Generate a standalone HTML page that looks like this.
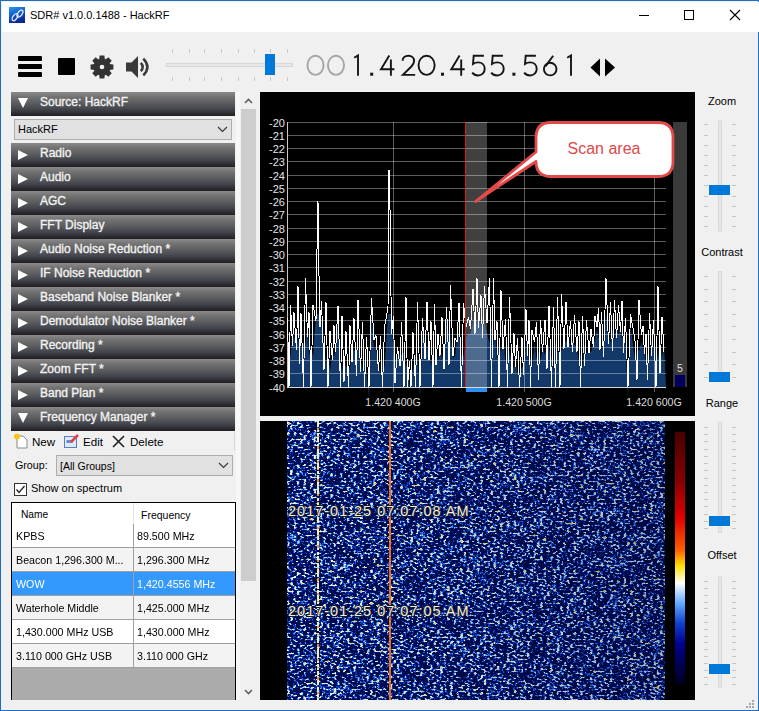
<!DOCTYPE html>
<html><head><meta charset="utf-8">
<style>
*{margin:0;padding:0;box-sizing:border-box}
html,body{width:759px;height:711px;overflow:hidden;background:#f0f0f0;font-family:"Liberation Sans",sans-serif}
.a{position:absolute}
#win{position:absolute;left:0;top:0;width:759px;height:711px;border:1px solid #1a6fc4;background:#f0f0f0}
#title{position:absolute;left:1px;top:1px;width:757px;height:30px;background:#fff}
.hdr{position:absolute;left:11px;width:224px;height:24px;background:linear-gradient(#8a8a8a 0%,#707070 22%,#5a5b5e 48%,#41444b 72%,#2c2c30 90%,#1e1e21 100%);color:#f2f2f2;font-size:12px;-webkit-text-stroke:0.35px #f2f2f2}
.hdr span{position:absolute;left:29px;top:3px;white-space:nowrap}
.hdr i{position:absolute;left:7px;top:7px;width:0;height:0}
.col i{border-top:5px solid transparent;border-bottom:5px solid transparent;border-left:10px solid #fff;top:7px;left:7px}
.exp i{border-left:5px solid transparent;border-right:5px solid transparent;border-top:10px solid #fff;top:6px;left:7px}
.lbl{font-size:11px;color:#000;white-space:nowrap}
.fc{position:absolute;top:48px;width:30px;text-align:center;font-size:30px;line-height:34px;color:#161616}
.tick{position:absolute;width:4px;height:1px;background:#c4c4c4}
.track{position:absolute;left:718px;width:4px;background:#e7e7e7;border:1px solid #d9d9d9}
.thumb{position:absolute;left:709px;width:21px;height:10px;background:#0078d7}
.rl{position:absolute;left:690px;width:64px;text-align:center;font-size:11px;color:#000}
td{font-size:12px}
</style></head><body>
<div id="win">
<div id="title"></div>
</div>

<!-- title bar icon -->
<div class="a" style="left:9px;top:7px;width:16px;height:16px;background:linear-gradient(160deg,#2a9af0 0%,#1060d0 40%,#0a32a0 75%,#081e80 100%)"></div>
<svg class="a" style="left:9px;top:7px" width="16" height="16" viewBox="0 0 16 16"><g fill="none" stroke="#e8eeff" stroke-width="1.3"><ellipse cx="6" cy="10.2" rx="2.1" ry="4" transform="rotate(35 6 10.2)"/><ellipse cx="11" cy="6.6" rx="2.1" ry="4" transform="rotate(35 11 6.6)"/></g></svg>
<div class="a" style="left:30px;top:9px;font-size:11px;color:#000;white-space:nowrap">SDR# v1.0.0.1488 - HackRF</div>
<!-- window controls -->
<div class="a" style="left:639px;top:15px;width:10px;height:1px;background:#000"></div>
<div class="a" style="left:684px;top:10px;width:10px;height:10px;border:1px solid #000"></div>
<svg class="a" style="left:729px;top:9px" width="12" height="12" viewBox="0 0 12 12"><path d="M1 1L11 11M11 1L1 11" stroke="#000" stroke-width="1.1"/></svg>

<!-- toolbar -->
<div class="a" style="left:18px;top:56px;width:24px;height:5px;background:#000;border-radius:1px"></div>
<div class="a" style="left:18px;top:64px;width:24px;height:5px;background:#000;border-radius:1px"></div>
<div class="a" style="left:18px;top:72px;width:24px;height:5px;background:#000;border-radius:1px"></div>
<div class="a" style="left:58px;top:58px;width:17px;height:17px;background:#000;border-radius:1px"></div>
<svg class="a" style="left:90px;top:55px" width="24" height="24" viewBox="0 0 24 24">
<g fill="#333"><circle cx="12" cy="12" r="8.6"/><path d="M9.6 0.6H14.4L14.9 5H9.1Z" transform="rotate(0 12 12)"/><path d="M9.6 0.6H14.4L14.9 5H9.1Z" transform="rotate(45 12 12)"/><path d="M9.6 0.6H14.4L14.9 5H9.1Z" transform="rotate(90 12 12)"/><path d="M9.6 0.6H14.4L14.9 5H9.1Z" transform="rotate(135 12 12)"/><path d="M9.6 0.6H14.4L14.9 5H9.1Z" transform="rotate(180 12 12)"/><path d="M9.6 0.6H14.4L14.9 5H9.1Z" transform="rotate(225 12 12)"/><path d="M9.6 0.6H14.4L14.9 5H9.1Z" transform="rotate(270 12 12)"/><path d="M9.6 0.6H14.4L14.9 5H9.1Z" transform="rotate(315 12 12)"/></g><circle cx="12" cy="12" r="2.3" fill="#f0f0f0"/></svg>
<svg class="a" style="left:125px;top:55px" width="26" height="24" viewBox="0 0 26 24">
<path d="M1 7.5H6.5L13 1V23L6.5 16.5H1Z" fill="#3a3a3a"/>
<path d="M15.8 7.8Q19.6 12 15.8 16.2" fill="none" stroke="#3a3a3a" stroke-width="2.5"/>
<path d="M18.3 3.6Q26.5 12 18.3 20.4" fill="none" stroke="#3a3a3a" stroke-width="2.5"/>
</svg>
<!-- audio slider -->
<div class="a" style="left:166px;top:63px;width:127px;height:4px;background:#e7e7e7;border:1px solid #d6d6d6"></div>
<div class="a" style="left:172px;top:49px;width:1px;height:4px;background:#c8c8c8"></div>
<div class="a" style="left:172px;top:77px;width:1px;height:4px;background:#c8c8c8"></div>
<div class="a" style="left:189px;top:49px;width:1px;height:4px;background:#c8c8c8"></div>
<div class="a" style="left:189px;top:77px;width:1px;height:4px;background:#c8c8c8"></div>
<div class="a" style="left:204px;top:49px;width:1px;height:4px;background:#c8c8c8"></div>
<div class="a" style="left:204px;top:77px;width:1px;height:4px;background:#c8c8c8"></div>
<div class="a" style="left:221px;top:49px;width:1px;height:4px;background:#c8c8c8"></div>
<div class="a" style="left:221px;top:77px;width:1px;height:4px;background:#c8c8c8"></div>
<div class="a" style="left:238px;top:49px;width:1px;height:4px;background:#c8c8c8"></div>
<div class="a" style="left:238px;top:77px;width:1px;height:4px;background:#c8c8c8"></div>
<div class="a" style="left:254px;top:49px;width:1px;height:4px;background:#c8c8c8"></div>
<div class="a" style="left:254px;top:77px;width:1px;height:4px;background:#c8c8c8"></div>
<div class="a" style="left:270px;top:49px;width:1px;height:4px;background:#c8c8c8"></div>
<div class="a" style="left:270px;top:77px;width:1px;height:4px;background:#c8c8c8"></div>
<div class="a" style="left:287px;top:49px;width:1px;height:4px;background:#c8c8c8"></div>
<div class="a" style="left:287px;top:77px;width:1px;height:4px;background:#c8c8c8"></div>
<div class="a" style="left:265px;top:54px;width:10px;height:21px;background:#0078d7"></div>

<!-- frequency display -->
<svg class="a" style="left:0;top:0" width="759" height="100" viewBox="0 0 759 100"><g fill="none" stroke-width="1.9" stroke-linecap="butt">
<g transform="translate(306.5 54.8)" stroke="#a4a4a4" color="#a4a4a4"><ellipse cx="9" cy="10.5" rx="8.05" ry="9.6"/></g>
<g transform="translate(327.0 54.8)" stroke="#a4a4a4" color="#a4a4a4"><ellipse cx="9" cy="10.5" rx="8.05" ry="9.6"/></g>
<g transform="translate(353.6 54.8)" stroke="#151515" color="#151515"><path d="M0.6 2.9L4.4 0.6V20.9"/></g>
<g transform="translate(370.2 54.8)" stroke="#151515" color="#151515"><rect x="0" y="17.9" width="3" height="3" stroke="none" fill="currentColor"/></g>
<g transform="translate(380.0 54.8)" stroke="#151515" color="#151515"><path d="M9.3 0.8L1 14.4H14.4M10.9 4.6V20.9"/></g>
<g transform="translate(401.6 54.8)" stroke="#151515" color="#151515"><path d="M1 5.9C1 2.7 3.6 0.9 6.8 0.9C10.1 0.9 12.5 3.1 12.5 6.2C12.5 8.4 11.5 9.9 9.8 11.7L1.3 20.1H13.6"/></g>
<g transform="translate(417.6 54.8)" stroke="#151515" color="#151515"><ellipse cx="9" cy="10.5" rx="8.05" ry="9.6"/></g>
<g transform="translate(441.0 54.8)" stroke="#151515" color="#151515"><rect x="0" y="17.9" width="3" height="3" stroke="none" fill="currentColor"/></g>
<g transform="translate(450.3 54.8)" stroke="#151515" color="#151515"><path d="M9.3 0.8L1 14.4H14.4M10.9 4.6V20.9"/></g>
<g transform="translate(471.6 54.8)" stroke="#151515" color="#151515"><path d="M12.3 0.9H2.1L1.4 9.1C2.9 8.1 4.6 7.6 6.5 7.6C10.3 7.6 13.1 10.3 13.1 14.1C13.1 17.9 10.2 20.7 6.4 20.7C4 20.7 2 19.7 0.6 17.9"/></g>
<g transform="translate(490.6 54.8)" stroke="#151515" color="#151515"><path d="M12.3 0.9H2.1L1.4 9.1C2.9 8.1 4.6 7.6 6.5 7.6C10.3 7.6 13.1 10.3 13.1 14.1C13.1 17.9 10.2 20.7 6.4 20.7C4 20.7 2 19.7 0.6 17.9"/></g>
<g transform="translate(512.4 54.8)" stroke="#151515" color="#151515"><rect x="0" y="17.9" width="3" height="3" stroke="none" fill="currentColor"/></g>
<g transform="translate(523.6 54.8)" stroke="#151515" color="#151515"><path d="M12.3 0.9H2.1L1.4 9.1C2.9 8.1 4.6 7.6 6.5 7.6C10.3 7.6 13.1 10.3 13.1 14.1C13.1 17.9 10.2 20.7 6.4 20.7C4 20.7 2 19.7 0.6 17.9"/></g>
<g transform="translate(543.0 54.8)" stroke="#151515" color="#151515"><path d="M10.2 0.9L2.4 11.6"/><circle cx="7.2" cy="14.3" r="6.3"/></g>
<g transform="translate(566.6 54.8)" stroke="#151515" color="#151515"><path d="M0.6 2.9L4.4 0.6V20.9"/></g>
</g></svg>
<svg class="a" style="left:589px;top:58px" width="28" height="19" viewBox="0 0 28 19">
<path d="M11 0.5V18.5L1.5 9.5Z" fill="#000"/><path d="M16 0.5V18.5L26 9.5Z" fill="#000"/></svg>

<!-- left panel -->
<div class="hdr exp" style="top:92px"><i></i><span>Source: HackRF</span></div>
<div class="hdr col" style="top:143px"><i></i><span>Radio</span></div>
<div class="hdr col" style="top:167px"><i></i><span>Audio</span></div>
<div class="hdr col" style="top:191px"><i></i><span>AGC</span></div>
<div class="hdr col" style="top:215px"><i></i><span>FFT Display</span></div>
<div class="hdr col" style="top:239px"><i></i><span>Audio Noise Reduction *</span></div>
<div class="hdr col" style="top:263px"><i></i><span>IF Noise Reduction *</span></div>
<div class="hdr col" style="top:287px"><i></i><span>Baseband Noise Blanker *</span></div>
<div class="hdr col" style="top:311px"><i></i><span>Demodulator Noise Blanker *</span></div>
<div class="hdr col" style="top:335px"><i></i><span>Recording *</span></div>
<div class="hdr col" style="top:359px"><i></i><span>Zoom FFT *</span></div>
<div class="hdr col" style="top:383px"><i></i><span>Band Plan *</span></div>
<div class="hdr exp" style="top:407px"><i></i><span>Frequency Manager *</span></div>
<div class="a" style="left:14px;top:119px;width:218px;height:21px;background:#e1e1e1;border:1px solid #adadad"></div>
<div class="a lbl" style="left:18px;top:123px">HackRF</div>
<svg class="a" style="left:217px;top:126px" width="11" height="7" viewBox="0 0 11 7"><path d="M1 1L5.5 5.5L10 1" fill="none" stroke="#333" stroke-width="1.1"/></svg>

<!-- freq manager toolbar -->
<svg class="a" style="left:13px;top:433px" width="16" height="16" viewBox="0 0 16 16">
<path d="M4 3H10L14 7V15H4Z" fill="#fff" stroke="#8a8a8a"/><circle cx="4" cy="3.5" r="3" fill="#f5c518"/></svg>
<div class="a lbl" style="left:32px;top:435px;font-size:11.6px">New</div>
<svg class="a" style="left:63px;top:433px" width="16" height="16" viewBox="0 0 16 16">
<rect x="1.5" y="3.5" width="12" height="11" fill="#dde8f8" stroke="#5a7fc0"/><rect x="3.5" y="7" width="6" height="3" fill="#6a8ad0"/><path d="M8 9L15 2" stroke="#e04040" stroke-width="2.5"/></svg>
<div class="a lbl" style="left:83px;top:435px;font-size:11.6px">Edit</div>
<svg class="a" style="left:112px;top:435px" width="13" height="13" viewBox="0 0 13 13"><path d="M1 1L12 12M12 1L1 12" stroke="#222" stroke-width="1.6"/></svg>
<div class="a lbl" style="left:130px;top:435px;font-size:11.6px">Delete</div>
<div class="a" style="left:234px;top:433px;width:1px;height:18px;background:#d8d8d8"></div>
<div class="a lbl" style="left:15px;top:459px;font-size:10.7px">Group:</div>
<div class="a" style="left:56px;top:455px;width:177px;height:21px;background:#e1e1e1;border:1px solid #adadad"></div>
<div class="a lbl" style="left:60px;top:460px;font-size:10.5px">[All Groups]</div>
<svg class="a" style="left:218px;top:462px" width="11" height="7" viewBox="0 0 11 7"><path d="M1 1L5.5 5.5L10 1" fill="none" stroke="#333" stroke-width="1.1"/></svg>
<div class="a" style="left:14px;top:483px;width:13px;height:13px;background:#fff;border:1px solid #333"></div>
<svg class="a" style="left:15px;top:484px" width="11" height="11" viewBox="0 0 11 11"><path d="M1.5 5.5L4 8.5L9.5 2" fill="none" stroke="#222" stroke-width="1.3"/></svg>
<div class="a lbl" style="left:31px;top:482px">Show on spectrum</div>

<!-- table -->
<div class="a" style="left:11px;top:502px;width:225px;height:198px;border:1px solid #000;border-bottom:0;background:#ababab"></div>
<div class="a" style="left:12px;top:503px;width:223px;height:21px;background:#fff"></div>
<div class="a lbl" style="left:21px;top:509px;font-size:10.2px">Name</div>
<div class="a lbl" style="left:141px;top:509px;font-size:10.5px">Frequency</div>
<div class="a" style="left:133px;top:503px;width:1px;height:20px;background:#e5e5e5"></div>
<div class="a" style="left:12px;top:524px;width:223px;height:24px;background:#fff;border-bottom:1px solid #a0a0a0"></div>
<div class="a" style="left:133px;top:524px;width:1px;height:23px;background:#a0a0a0"></div>
<div class="a lbl" style="left:16px;top:529px;color:#000;font-size:11.6px;transform:scaleX(0.922);transform-origin:0 0">KPBS</div>
<div class="a lbl" style="left:137px;top:529px;color:#000;font-size:11.6px;transform:scaleX(0.922);transform-origin:0 0">89.500 MHz</div>
<div class="a" style="left:12px;top:548px;width:223px;height:24px;background:#f3f3f3;border-bottom:1px solid #a0a0a0"></div>
<div class="a" style="left:133px;top:548px;width:1px;height:23px;background:#a0a0a0"></div>
<div class="a lbl" style="left:16px;top:553px;color:#000;font-size:11.6px;transform:scaleX(0.922);transform-origin:0 0">Beacon 1,296.300 M...</div>
<div class="a lbl" style="left:137px;top:553px;color:#000;font-size:11.6px;transform:scaleX(0.922);transform-origin:0 0">1,296.300 MHz</div>
<div class="a" style="left:12px;top:572px;width:223px;height:24px;background:#3399ff;border-bottom:1px solid #a0a0a0"></div>
<div class="a" style="left:133px;top:572px;width:1px;height:23px;background:#a0a0a0"></div>
<div class="a lbl" style="left:16px;top:577px;color:#fff;font-size:11.6px;transform:scaleX(0.922);transform-origin:0 0">WOW</div>
<div class="a lbl" style="left:137px;top:577px;color:#fff;font-size:11.6px;transform:scaleX(0.922);transform-origin:0 0">1,420.4556 MHz</div>
<div class="a" style="left:12px;top:596px;width:223px;height:24px;background:#f3f3f3;border-bottom:1px solid #a0a0a0"></div>
<div class="a" style="left:133px;top:596px;width:1px;height:23px;background:#a0a0a0"></div>
<div class="a lbl" style="left:16px;top:601px;color:#000;font-size:11.6px;transform:scaleX(0.922);transform-origin:0 0">Waterhole Middle</div>
<div class="a lbl" style="left:137px;top:601px;color:#000;font-size:11.6px;transform:scaleX(0.922);transform-origin:0 0">1,425.000 MHz</div>
<div class="a" style="left:12px;top:620px;width:223px;height:24px;background:#fff;border-bottom:1px solid #a0a0a0"></div>
<div class="a" style="left:133px;top:620px;width:1px;height:23px;background:#a0a0a0"></div>
<div class="a lbl" style="left:16px;top:625px;color:#000;font-size:11.6px;transform:scaleX(0.922);transform-origin:0 0">1,430.000 MHz USB</div>
<div class="a lbl" style="left:137px;top:625px;color:#000;font-size:11.6px;transform:scaleX(0.922);transform-origin:0 0">1,430.000 MHz</div>
<div class="a" style="left:12px;top:644px;width:223px;height:24px;background:#f3f3f3;border-bottom:1px solid #a0a0a0"></div>
<div class="a" style="left:133px;top:644px;width:1px;height:23px;background:#a0a0a0"></div>
<div class="a lbl" style="left:16px;top:649px;color:#000;font-size:11.6px;transform:scaleX(0.922);transform-origin:0 0">3.110 000 GHz USB</div>
<div class="a lbl" style="left:137px;top:649px;color:#000;font-size:11.6px;transform:scaleX(0.922);transform-origin:0 0">3.110 000 GHz</div>

<!-- left scrollbar -->
<div class="a" style="left:236px;top:92px;width:4px;height:608px;background:#f7f7f7"></div>
<div class="a" style="left:241px;top:109px;width:15px;height:472px;background:#cdcdcd"></div>
<svg class="a" style="left:244px;top:98px" width="9" height="6" viewBox="0 0 9 6"><path d="M1 5L4.5 1.5L8 5" fill="none" stroke="#606060" stroke-width="1.6"/></svg>
<svg class="a" style="left:244px;top:689px" width="9" height="6" viewBox="0 0 9 6"><path d="M1 1L4.5 4.5L8 1" fill="none" stroke="#606060" stroke-width="1.6"/></svg>

<!-- spectrum panel -->
<div class="a" style="left:260px;top:92px;width:435px;height:324px;background:#000"></div>
<svg class="a" style="left:0;top:0" width="759" height="711" viewBox="0 0 759 711">
<polygon points="287,387 287.5,363.3 289.0,347.3 290.5,356.4 292.5,331.5 294.0,339.6 296.5,328.9 298.0,344.0 299.5,331.6 301.0,348.9 303.5,343.3 305.5,344.6 307.5,319.7 309.0,355.9 311.0,345.4 313.0,356.7 316.0,314.1 317.5,314.1 318.0,314.1 318.6,314.1 320.0,314.1 321.5,324.9 324.0,346.8 326.0,363.7 328.0,350.8 330.0,369.7 332.5,353.3 334.0,356.5 335.5,349.5 338.0,316.6 340.5,361.9 342.0,372.1 344.0,353.5 346.0,367.2 348.5,366.8 350.0,368.9 352.0,346.0 354.0,350.9 356.5,348.7 358.0,348.7 360.5,357.7 362.5,371.0 364.5,359.2 366.5,372.4 369.0,397.6 371.5,314.1 374.0,348.2 376.0,348.2 378.5,364.1 380.5,375.2 382.5,360.6 384.5,367.7 388.0,314.1 389.0,314.1 389.8,314.1 390.3,314.1 391.5,314.1 393.5,354.9 395.0,360.1 397.5,357.6 400.0,354.6 401.5,354.6 404.0,352.6 406.0,367.6 407.5,358.8 409.5,388.8 411.0,370.5 413.0,370.2 415.5,354.9 417.5,354.9 420.0,397.6 422.5,328.5 425.0,341.1 427.0,351.0 429.0,338.3 431.0,366.7 433.0,348.1 434.5,362.8 436.0,345.0 438.0,362.1 440.0,346.3 442.0,358.1 444.0,354.0 446.5,318.1 449.0,335.5 450.5,335.5 453.0,357.7 455.0,356.1 457.0,338.2 459.0,333.0 461.5,355.7 463.5,355.7 466.0,337.4 468.5,333.7 470.5,333.7 473.0,321.9 475.0,314.1 477.0,323.9 478.5,314.1 481.0,327.2 482.5,316.9 484.5,322.3 487.0,333.7 489.5,343.3 491.5,325.2 493.5,345.7 495.0,323.7 497.0,359.9 499.0,343.3 501.0,352.8 503.0,330.4 505.5,363.4 507.5,344.7 509.5,352.4 512.0,364.2 514.0,368.5 515.5,356.7 517.5,374.6 519.5,373.3 522.0,366.8 523.5,366.8 526.0,343.5 527.5,339.2 529.0,365.1 530.5,356.4 532.0,369.3 534.5,342.9 536.5,358.7 538.5,351.2 540.5,361.0 542.5,346.3 545.0,355.2 547.0,342.2 549.0,348.1 551.5,357.5 553.5,370.9 555.5,340.8 557.5,352.5 560.0,351.3 561.5,351.3 564.0,335.9 566.0,343.1 568.0,334.9 570.5,347.4 572.5,340.3 574.5,344.4 577.0,347.1 579.0,363.9 580.5,352.0 582.5,366.7 584.5,344.5 586.5,353.6 589.0,351.9 591.0,351.9 593.5,342.0 595.0,340.6 597.0,327.6 598.5,338.9 600.0,333.9 601.5,350.3 603.5,345.3 606.0,314.1 608.5,333.9 610.5,343.0 612.5,328.4 614.5,340.3 616.5,325.2 618.5,335.8 620.5,323.3 622.0,339.0 623.5,334.2 625.5,345.7 628.0,397.6 630.5,324.8 633.0,344.9 635.0,360.0 637.0,350.8 639.0,350.6 641.5,341.4 643.0,349.1 644.5,348.5 646.0,366.6 647.5,352.9 649.5,360.5 651.5,340.4 653.5,348.8 656.0,347.1 658.0,359.3 660.0,335.8 662.0,357.7 664.0,344.7 666,387" fill="#12396a"/>
<g stroke="rgba(255,255,255,0.36)" stroke-width="1">
<line x1="287" y1="122.5" x2="666" y2="122.5"/>
<line x1="287" y1="135.5" x2="666" y2="135.5"/>
<line x1="287" y1="148.5" x2="666" y2="148.5"/>
<line x1="287" y1="161.5" x2="666" y2="161.5"/>
<line x1="287" y1="175.5" x2="666" y2="175.5"/>
<line x1="287" y1="188.5" x2="666" y2="188.5"/>
<line x1="287" y1="201.5" x2="666" y2="201.5"/>
<line x1="287" y1="214.5" x2="666" y2="214.5"/>
<line x1="287" y1="228.5" x2="666" y2="228.5"/>
<line x1="287" y1="241.5" x2="666" y2="241.5"/>
<line x1="287" y1="254.5" x2="666" y2="254.5"/>
<line x1="287" y1="267.5" x2="666" y2="267.5"/>
<line x1="287" y1="281.5" x2="666" y2="281.5"/>
<line x1="287" y1="294.5" x2="666" y2="294.5"/>
<line x1="287" y1="307.5" x2="666" y2="307.5"/>
<line x1="287" y1="320.5" x2="666" y2="320.5"/>
<line x1="287" y1="334.5" x2="666" y2="334.5"/>
<line x1="287" y1="347.5" x2="666" y2="347.5"/>
<line x1="287" y1="360.5" x2="666" y2="360.5"/>
<line x1="287" y1="373.5" x2="666" y2="373.5"/>
<line x1="287" y1="387.5" x2="666" y2="387.5"/>
<line x1="393.5" y1="122" x2="393.5" y2="392"/>
<line x1="524.5" y1="122" x2="524.5" y2="392"/>
<line x1="654.5" y1="122" x2="654.5" y2="392"/>
</g>
<line x1="287.5" y1="122" x2="287.5" y2="388" stroke="#c8c8c8"/>
<line x1="287" y1="387.5" x2="666" y2="387.5" stroke="#d8d8d8"/>
<polyline points="287.5,318.3 289.0,387.0 290.5,304.7 292.5,345.7 294.0,312.3 296.5,350.3 298.0,286.3 299.5,363.5 301.0,313.2 303.5,387.0 305.5,278.4 307.5,336.6 309.0,312.4 311.0,387.0 313.0,305.1 316.0,320.8 317.5,214.8 318.0,201.5 318.6,254.5 320.0,327.4 321.5,301.1 324.0,370.1 326.0,302.3 328.0,387.0 330.0,331.3 332.5,360.1 334.0,325.3 335.5,352.4 338.0,306.0 340.5,387.0 342.0,315.6 344.0,381.8 346.0,331.3 348.5,387.0 350.0,325.4 352.0,362.4 354.0,318.3 356.5,376.1 358.0,300.0 360.5,371.8 362.5,322.3 364.5,387.0 366.5,336.6 369.0,387.0 371.5,297.8 374.0,339.6 376.0,335.6 378.5,371.2 380.5,335.7 382.5,387.0 384.5,327.1 388.0,307.5 389.0,169.7 389.8,188.2 390.3,241.2 391.5,334.0 393.5,316.0 395.0,383.0 397.5,347.0 400.0,366.4 401.5,321.6 404.0,387.0 406.0,296.9 407.5,387.0 409.5,360.6 411.0,387.0 413.0,332.2 415.5,387.0 417.5,301.7 420.0,387.0 422.5,317.9 425.0,359.3 427.0,301.7 429.0,360.3 431.0,321.0 433.0,387.0 434.5,304.4 436.0,365.0 438.0,333.6 440.0,355.9 442.0,317.5 444.0,369.2 446.5,307.5 449.0,365.2 450.5,284.6 453.0,356.3 455.0,338.0 457.0,342.3 459.0,302.6 461.5,387.0 463.5,303.2 466.0,326.8 468.5,317.6 470.5,328.6 473.0,289.0 475.0,333.6 477.0,278.4 478.5,327.9 481.0,295.4 482.5,337.9 484.5,285.6 487.0,323.1 489.5,278.4 491.5,387.0 493.5,278.4 495.0,339.9 497.0,321.0 499.0,387.0 501.0,290.1 503.0,349.4 505.5,318.6 507.5,387.0 509.5,296.6 512.0,373.8 514.0,333.3 515.5,366.5 517.5,338.5 519.5,387.0 522.0,337.5 523.5,375.0 526.0,309.4 527.5,356.4 529.0,320.0 530.5,387.0 532.0,330.3 534.5,342.4 536.5,322.3 538.5,379.6 540.5,319.9 542.5,351.6 545.0,319.9 547.0,369.2 549.0,305.8 551.5,387.0 553.5,306.9 555.5,387.0 557.5,296.8 560.0,387.0 561.5,294.3 564.0,349.0 566.0,301.6 568.0,347.0 570.5,321.4 572.5,352.1 574.5,315.5 577.0,351.5 579.0,321.5 580.5,387.0 582.5,315.8 584.5,365.5 586.5,320.5 589.0,353.3 591.0,329.3 593.5,347.1 595.0,315.8 597.0,327.1 598.5,308.0 600.0,349.8 601.5,312.0 603.5,357.3 606.0,278.4 608.5,344.2 610.5,302.3 612.5,350.7 614.5,300.3 616.5,338.2 618.5,305.4 620.5,332.1 622.0,300.6 623.5,352.5 625.5,317.6 628.0,387.0 630.5,314.2 633.0,328.0 635.0,340.6 637.0,379.7 639.0,300.3 641.5,335.4 643.0,326.1 644.5,354.0 646.0,333.6 647.5,380.4 649.5,313.1 651.5,356.2 653.5,320.2 656.0,387.0 658.0,285.9 660.0,373.1 662.0,316.7 664.0,351.6" fill="none" stroke="#fff" stroke-width="1" shape-rendering="crispEdges"/>
<rect x="466" y="122" width="21" height="265" fill="rgba(255,255,255,0.25)"/>
<line x1="465.5" y1="122" x2="465.5" y2="387" stroke="#e01818"/>
<rect x="466" y="388" width="21" height="4" fill="#2f8ff0"/>
<rect x="673" y="122" width="14" height="265" fill="#3a3a3a"/>
<rect x="675" y="375" width="10" height="12" fill="#00005c"/>
<g font-family="Liberation Sans" font-size="11" fill="#e4e4e4" text-anchor="end">
<text x="285" y="126.5">-20</text>
<text x="285" y="139.8">-21</text>
<text x="285" y="153.0">-22</text>
<text x="285" y="166.2">-23</text>
<text x="285" y="179.5">-24</text>
<text x="285" y="192.8">-25</text>
<text x="285" y="206.0">-26</text>
<text x="285" y="219.2">-27</text>
<text x="285" y="232.5">-28</text>
<text x="285" y="245.8">-29</text>
<text x="285" y="259.0">-30</text>
<text x="285" y="272.2">-31</text>
<text x="285" y="285.5">-32</text>
<text x="285" y="298.8">-33</text>
<text x="285" y="312.0">-34</text>
<text x="285" y="325.2">-35</text>
<text x="285" y="338.5">-36</text>
<text x="285" y="351.8">-37</text>
<text x="285" y="365.0">-38</text>
<text x="285" y="378.2">-39</text>
<text x="285" y="391.5">-40</text>
</g>
<g font-family="Liberation Sans" font-size="10.6" fill="#dcdcdc" text-anchor="middle">
<text x="393" y="406">1.420 400G</text><text x="524" y="406">1.420 500G</text><text x="654" y="406">1.420 600G</text>
<text x="680" y="372">5</text>
</g>
<!-- callout -->
<path d="M551,122.5 H658 Q673,122.5 673,137.5 V161.5 Q673,176.5 658,176.5 H551 Q536,176.5 536,161.5 L475.5,201.5 L536,152 V137.5 Q536,122.5 551,122.5Z" fill="#fff" stroke="#e24a4a" stroke-width="2.8" stroke-linejoin="round"/>
<text x="604" y="154" font-family="Liberation Sans" font-size="16" fill="#e04848" text-anchor="middle">Scan area</text>
</svg>

<!-- waterfall panel -->
<div class="a" style="left:260px;top:421px;width:435px;height:279px;background:#000"></div>
<svg class="a" style="left:287px;top:421px" width="378" height="279" viewBox="0 0 378 279">
<defs>
<filter id="wf" x="0" y="0" width="100%" height="100%" filterUnits="userSpaceOnUse" color-interpolation-filters="sRGB">
<feTurbulence type="fractalNoise" baseFrequency="0.3 0.5" numOctaves="2" seed="3" result="n"/>
<feTurbulence type="fractalNoise" baseFrequency="0.05 0.08" numOctaves="2" seed="11" result="c"/>
<feComposite in="n" in2="c" operator="arithmetic" k1="0" k2="0.92" k3="0.16" k4="-0.04" result="m"/>
<feColorMatrix in="m" type="matrix" values="1 0 0 0 0  1 0 0 0 0  1 0 0 0 0  0 0 0 0 1" result="g"/>
<feComponentTransfer in="g">
<feFuncR type="table" tableValues="0 0 0 0 0 0 0 0 0 0 0 0 0 0 0 0 0 0 0 0 0 0 0 0 0 0 0 0 0 0 0 0 0 0 0 0 0 0 0 0 0 0 0 0 0 0 0 0 0 0 0 0 0 0 0 0 0 0 0 0 0 0 0 0 0 0 0 0 0 0 0 0 0 0 0 0 0 0 0 0 0 0 0 0 0 0 0 0 0 0 0 0 0 0 0 0 0 0 0 0 0 0 0 0 0 0 0 0 0 0 0 0 0 0 0 0 0 0 0.00357 0.00713 0.0107 0.0143 0.0178 0.0214 0.025 0.0285 0.0321 0.0357 0.0392 0.0523 0.0654 0.0784 0.0915 0.105 0.118 0.131 0.144 0.157 0.17 0.183 0.196 0.209 0.222 0.235 0.275 0.315 0.355 0.395 0.434 0.474 0.514 0.554 0.594 0.633 0.673 0.713 0.753 0.772 0.791 0.81 0.829 0.848 0.867 0.886 0.905 0.924 0.943 0.962 0.981 1 1 1 1 1 1 1 1 1 1 1 1 1 1 1 1 1 1 1 1 1 1 1 1 1 1 1 1 1 1 1 1 1 1 1 1 1 1 1 1 1 1 1 1 1 1 1 1 1 1 1 1 1 1 1 1 1 1 1 1 1 1 1 1 1 1 1 1 1 1 1 1 1 1 1 1 1 1 1 1 1 1 1 1 1 1 1"/>
<feFuncG type="table" tableValues="0.0157 0.016 0.0162 0.0165 0.0168 0.017 0.0173 0.0176 0.0178 0.0181 0.0184 0.0186 0.0189 0.0192 0.0194 0.0197 0.02 0.0202 0.0205 0.0208 0.021 0.0213 0.0216 0.0219 0.0221 0.0224 0.0227 0.0229 0.0232 0.0235 0.0237 0.024 0.0243 0.0245 0.0248 0.0251 0.0253 0.0256 0.0259 0.0261 0.0264 0.0267 0.0269 0.0272 0.0275 0.0278 0.028 0.0283 0.0286 0.0288 0.0291 0.0294 0.0296 0.0299 0.0302 0.0304 0.0307 0.031 0.0312 0.0315 0.0318 0.032 0.0323 0.0326 0.0328 0.0331 0.0334 0.0337 0.0339 0.0342 0.0345 0.0347 0.035 0.0353 0.0355 0.0358 0.0361 0.0363 0.0366 0.0369 0.0371 0.0374 0.0377 0.0379 0.0382 0.0385 0.0387 0.039 0.0393 0.0396 0.0398 0.0401 0.0404 0.0406 0.0409 0.0412 0.0414 0.0417 0.042 0.0422 0.0425 0.0428 0.043 0.0433 0.0436 0.0438 0.0441 0.0444 0.0446 0.0449 0.0452 0.0454 0.0457 0.046 0.0463 0.0465 0.0468 0.0471 0.0642 0.0813 0.0984 0.116 0.133 0.15 0.167 0.184 0.201 0.218 0.235 0.257 0.279 0.301 0.323 0.345 0.367 0.389 0.411 0.433 0.455 0.477 0.499 0.521 0.543 0.565 0.59 0.615 0.641 0.666 0.691 0.717 0.742 0.767 0.793 0.818 0.843 0.869 0.894 0.902 0.91 0.919 0.927 0.935 0.943 0.951 0.959 0.967 0.976 0.984 0.992 1 0.991 0.983 0.974 0.965 0.957 0.948 0.939 0.931 0.922 0.913 0.904 0.896 0.887 0.878 0.871 0.864 0.858 0.851 0.844 0.837 0.83 0.823 0.816 0.809 0.802 0.795 0.788 0.781 0.774 0.767 0.76 0.753 0.746 0.739 0.732 0.725 0.718 0.711 0.704 0.697 0.69 0.683 0.676 0.669 0.662 0.655 0.648 0.641 0.634 0.627 0.62 0.614 0.607 0.6 0.593 0.586 0.579 0.572 0.565 0.558 0.551 0.544 0.537 0.53 0.523 0.516 0.509 0.502 0.495 0.488 0.481 0.474 0.467 0.46 0.453 0.446 0.439 0.432 0.425 0.418 0.411 0.404 0.397 0.39 0.383 0.376"/>
<feFuncB type="table" tableValues="0.125 0.127 0.129 0.131 0.133 0.135 0.137 0.139 0.141 0.143 0.145 0.147 0.149 0.151 0.153 0.155 0.157 0.159 0.16 0.162 0.164 0.166 0.168 0.17 0.172 0.174 0.176 0.178 0.18 0.182 0.184 0.186 0.188 0.19 0.192 0.194 0.195 0.197 0.199 0.201 0.203 0.205 0.207 0.209 0.211 0.213 0.215 0.217 0.219 0.221 0.223 0.225 0.227 0.229 0.23 0.232 0.234 0.236 0.238 0.24 0.242 0.244 0.246 0.248 0.25 0.252 0.254 0.256 0.258 0.26 0.262 0.264 0.265 0.267 0.269 0.271 0.273 0.275 0.277 0.279 0.281 0.283 0.285 0.287 0.289 0.291 0.293 0.295 0.297 0.299 0.3 0.302 0.304 0.306 0.308 0.31 0.312 0.314 0.316 0.318 0.32 0.322 0.324 0.326 0.328 0.33 0.332 0.334 0.335 0.337 0.339 0.341 0.343 0.345 0.347 0.349 0.351 0.353 0.392 0.431 0.471 0.51 0.549 0.588 0.627 0.667 0.706 0.745 0.784 0.799 0.813 0.827 0.842 0.856 0.871 0.885 0.899 0.914 0.928 0.942 0.957 0.971 0.986 1 1 1 1 1 1 1 1 1 1 1 1 1 1 1 1 1 1 1 1 1 1 1 1 1 1 1 0.946 0.893 0.839 0.786 0.732 0.679 0.625 0.572 0.518 0.465 0.411 0.358 0.304 0.251 0.247 0.244 0.241 0.237 0.234 0.23 0.227 0.223 0.22 0.216 0.213 0.209 0.206 0.202 0.199 0.195 0.192 0.188 0.185 0.181 0.178 0.174 0.171 0.167 0.164 0.16 0.157 0.153 0.15 0.146 0.143 0.139 0.136 0.132 0.129 0.125 0.122 0.119 0.115 0.112 0.108 0.105 0.101 0.0976 0.0941 0.0906 0.0871 0.0837 0.0802 0.0767 0.0732 0.0697 0.0662 0.0627 0.0593 0.0558 0.0523 0.0488 0.0453 0.0418 0.0383 0.0349 0.0314 0.0279 0.0244 0.0209 0.0174 0.0139 0.0105 0.00697 0.00349 0"/>
</feComponentTransfer>
</filter>
</defs>
<rect width="378" height="279" filter="url(#wf)"/>
<line x1="31" y1="0" x2="31" y2="279" stroke="#fff2a0" stroke-width="2" stroke-dasharray="6 1 4 1 9 2 3 1"/><line x1="31" y1="0" x2="31" y2="279" stroke="#ff9020" stroke-width="2" stroke-dasharray="0 7 2 6 1 9 3 5"/>
<line x1="103" y1="0" x2="103" y2="279" stroke="#ff6a10" stroke-width="2"/><line x1="103" y1="0" x2="103" y2="279" stroke="#ffd040" stroke-width="1" stroke-dasharray="1 5 2 7 1 4"/>
<rect width="378" height="279" fill="url(#wgr)"/>
<defs><linearGradient id="wgr" x1="0" x2="1" y1="0" y2="0"><stop offset="0" stop-color="#000020" stop-opacity="0"/><stop offset="0.4" stop-color="#000020" stop-opacity="0.08"/><stop offset="1" stop-color="#000020" stop-opacity="0.26"/></linearGradient></defs>
</svg>
<div class="a" style="left:288px;top:503px;font-family:'Liberation Sans';font-size:14.5px;letter-spacing:1px;color:#eeeeee;text-shadow:1px 0 0 #1a1a1a,-1px 0 0 #1a1a1a,0 1px 0 #1a1a1a,0 -1px 0 #1a1a1a;white-space:nowrap">2017-01-25 07:07:08 AM</div>
<div class="a" style="left:288px;top:603px;font-family:'Liberation Sans';font-size:14.5px;letter-spacing:1px;color:#eeeeee;text-shadow:1px 0 0 #1a1a1a,-1px 0 0 #1a1a1a,0 1px 0 #1a1a1a,0 -1px 0 #1a1a1a;white-space:nowrap">2017-01-25 07:07:05 AM</div>
<div class="a" style="left:675px;top:432px;width:10px;height:252px;background:linear-gradient(#4a0000 0%,#8a0000 20%,#e00000 34%,#ff6000 47%,#ffe000 53%,#ffffff 60%,#60a8ff 68%,#1040d0 76%,#000090 84%,#000020 100%)"></div>

<!-- right panel -->
<div class="rl" style="top:95px">Zoom</div>
<div class="rl" style="top:246px">Contrast</div>
<div class="rl" style="top:397px">Range</div>
<div class="rl" style="top:549px">Offset</div>
<div class="track" style="top:120px;height:112px"></div>
<div class="tick" style="left:704px;top:124px"></div><div class="tick" style="left:732px;top:124px"></div>
<div class="tick" style="left:704px;top:135px"></div><div class="tick" style="left:732px;top:135px"></div>
<div class="tick" style="left:704px;top:145px"></div><div class="tick" style="left:732px;top:145px"></div>
<div class="tick" style="left:704px;top:155px"></div><div class="tick" style="left:732px;top:155px"></div>
<div class="tick" style="left:704px;top:165px"></div><div class="tick" style="left:732px;top:165px"></div>
<div class="tick" style="left:704px;top:175px"></div><div class="tick" style="left:732px;top:175px"></div>
<div class="tick" style="left:704px;top:185px"></div><div class="tick" style="left:732px;top:185px"></div>
<div class="tick" style="left:704px;top:196px"></div><div class="tick" style="left:732px;top:196px"></div>
<div class="tick" style="left:704px;top:206px"></div><div class="tick" style="left:732px;top:206px"></div>
<div class="tick" style="left:704px;top:216px"></div><div class="tick" style="left:732px;top:216px"></div>
<div class="tick" style="left:704px;top:226px"></div><div class="tick" style="left:732px;top:226px"></div>
<div class="thumb" style="top:185px"></div>
<div class="track" style="top:271px;height:111px"></div>
<div class="tick" style="left:704px;top:276px"></div><div class="tick" style="left:732px;top:276px"></div>
<div class="tick" style="left:704px;top:289px"></div><div class="tick" style="left:732px;top:289px"></div>
<div class="tick" style="left:704px;top:301px"></div><div class="tick" style="left:732px;top:301px"></div>
<div class="tick" style="left:704px;top:314px"></div><div class="tick" style="left:732px;top:314px"></div>
<div class="tick" style="left:704px;top:326px"></div><div class="tick" style="left:732px;top:326px"></div>
<div class="tick" style="left:704px;top:339px"></div><div class="tick" style="left:732px;top:339px"></div>
<div class="tick" style="left:704px;top:352px"></div><div class="tick" style="left:732px;top:352px"></div>
<div class="tick" style="left:704px;top:364px"></div><div class="tick" style="left:732px;top:364px"></div>
<div class="tick" style="left:704px;top:377px"></div><div class="tick" style="left:732px;top:377px"></div>
<div class="thumb" style="top:372px"></div>
<div class="track" style="top:422px;height:111px"></div>
<div class="tick" style="left:704px;top:427px"></div><div class="tick" style="left:732px;top:427px"></div>
<div class="tick" style="left:704px;top:434px"></div><div class="tick" style="left:732px;top:434px"></div>
<div class="tick" style="left:704px;top:441px"></div><div class="tick" style="left:732px;top:441px"></div>
<div class="tick" style="left:704px;top:449px"></div><div class="tick" style="left:732px;top:449px"></div>
<div class="tick" style="left:704px;top:456px"></div><div class="tick" style="left:732px;top:456px"></div>
<div class="tick" style="left:704px;top:463px"></div><div class="tick" style="left:732px;top:463px"></div>
<div class="tick" style="left:704px;top:470px"></div><div class="tick" style="left:732px;top:470px"></div>
<div class="tick" style="left:704px;top:478px"></div><div class="tick" style="left:732px;top:478px"></div>
<div class="tick" style="left:704px;top:485px"></div><div class="tick" style="left:732px;top:485px"></div>
<div class="tick" style="left:704px;top:492px"></div><div class="tick" style="left:732px;top:492px"></div>
<div class="tick" style="left:704px;top:499px"></div><div class="tick" style="left:732px;top:499px"></div>
<div class="tick" style="left:704px;top:506px"></div><div class="tick" style="left:732px;top:506px"></div>
<div class="tick" style="left:704px;top:514px"></div><div class="tick" style="left:732px;top:514px"></div>
<div class="tick" style="left:704px;top:521px"></div><div class="tick" style="left:732px;top:521px"></div>
<div class="tick" style="left:704px;top:528px"></div><div class="tick" style="left:732px;top:528px"></div>
<div class="thumb" style="top:516px"></div>
<div class="track" style="top:576px;height:112px"></div>
<div class="tick" style="left:704px;top:581px"></div><div class="tick" style="left:732px;top:581px"></div>
<div class="tick" style="left:704px;top:588px"></div><div class="tick" style="left:732px;top:588px"></div>
<div class="tick" style="left:704px;top:595px"></div><div class="tick" style="left:732px;top:595px"></div>
<div class="tick" style="left:704px;top:602px"></div><div class="tick" style="left:732px;top:602px"></div>
<div class="tick" style="left:704px;top:608px"></div><div class="tick" style="left:732px;top:608px"></div>
<div class="tick" style="left:704px;top:615px"></div><div class="tick" style="left:732px;top:615px"></div>
<div class="tick" style="left:704px;top:622px"></div><div class="tick" style="left:732px;top:622px"></div>
<div class="tick" style="left:704px;top:629px"></div><div class="tick" style="left:732px;top:629px"></div>
<div class="tick" style="left:704px;top:636px"></div><div class="tick" style="left:732px;top:636px"></div>
<div class="tick" style="left:704px;top:642px"></div><div class="tick" style="left:732px;top:642px"></div>
<div class="tick" style="left:704px;top:649px"></div><div class="tick" style="left:732px;top:649px"></div>
<div class="tick" style="left:704px;top:656px"></div><div class="tick" style="left:732px;top:656px"></div>
<div class="tick" style="left:704px;top:663px"></div><div class="tick" style="left:732px;top:663px"></div>
<div class="tick" style="left:704px;top:670px"></div><div class="tick" style="left:732px;top:670px"></div>
<div class="tick" style="left:704px;top:677px"></div><div class="tick" style="left:732px;top:677px"></div>
<div class="tick" style="left:704px;top:684px"></div><div class="tick" style="left:732px;top:684px"></div>
<div class="thumb" style="top:664px"></div>
<div class="a" style="left:752px;top:700px;width:2px;height:2px;background:#a8a8a8"></div><div class="a" style="left:749px;top:703px;width:2px;height:2px;background:#a8a8a8"></div><div class="a" style="left:752px;top:703px;width:2px;height:2px;background:#a8a8a8"></div><div class="a" style="left:746px;top:706px;width:2px;height:2px;background:#a8a8a8"></div><div class="a" style="left:749px;top:706px;width:2px;height:2px;background:#a8a8a8"></div><div class="a" style="left:752px;top:706px;width:2px;height:2px;background:#a8a8a8"></div>
</body></html>
